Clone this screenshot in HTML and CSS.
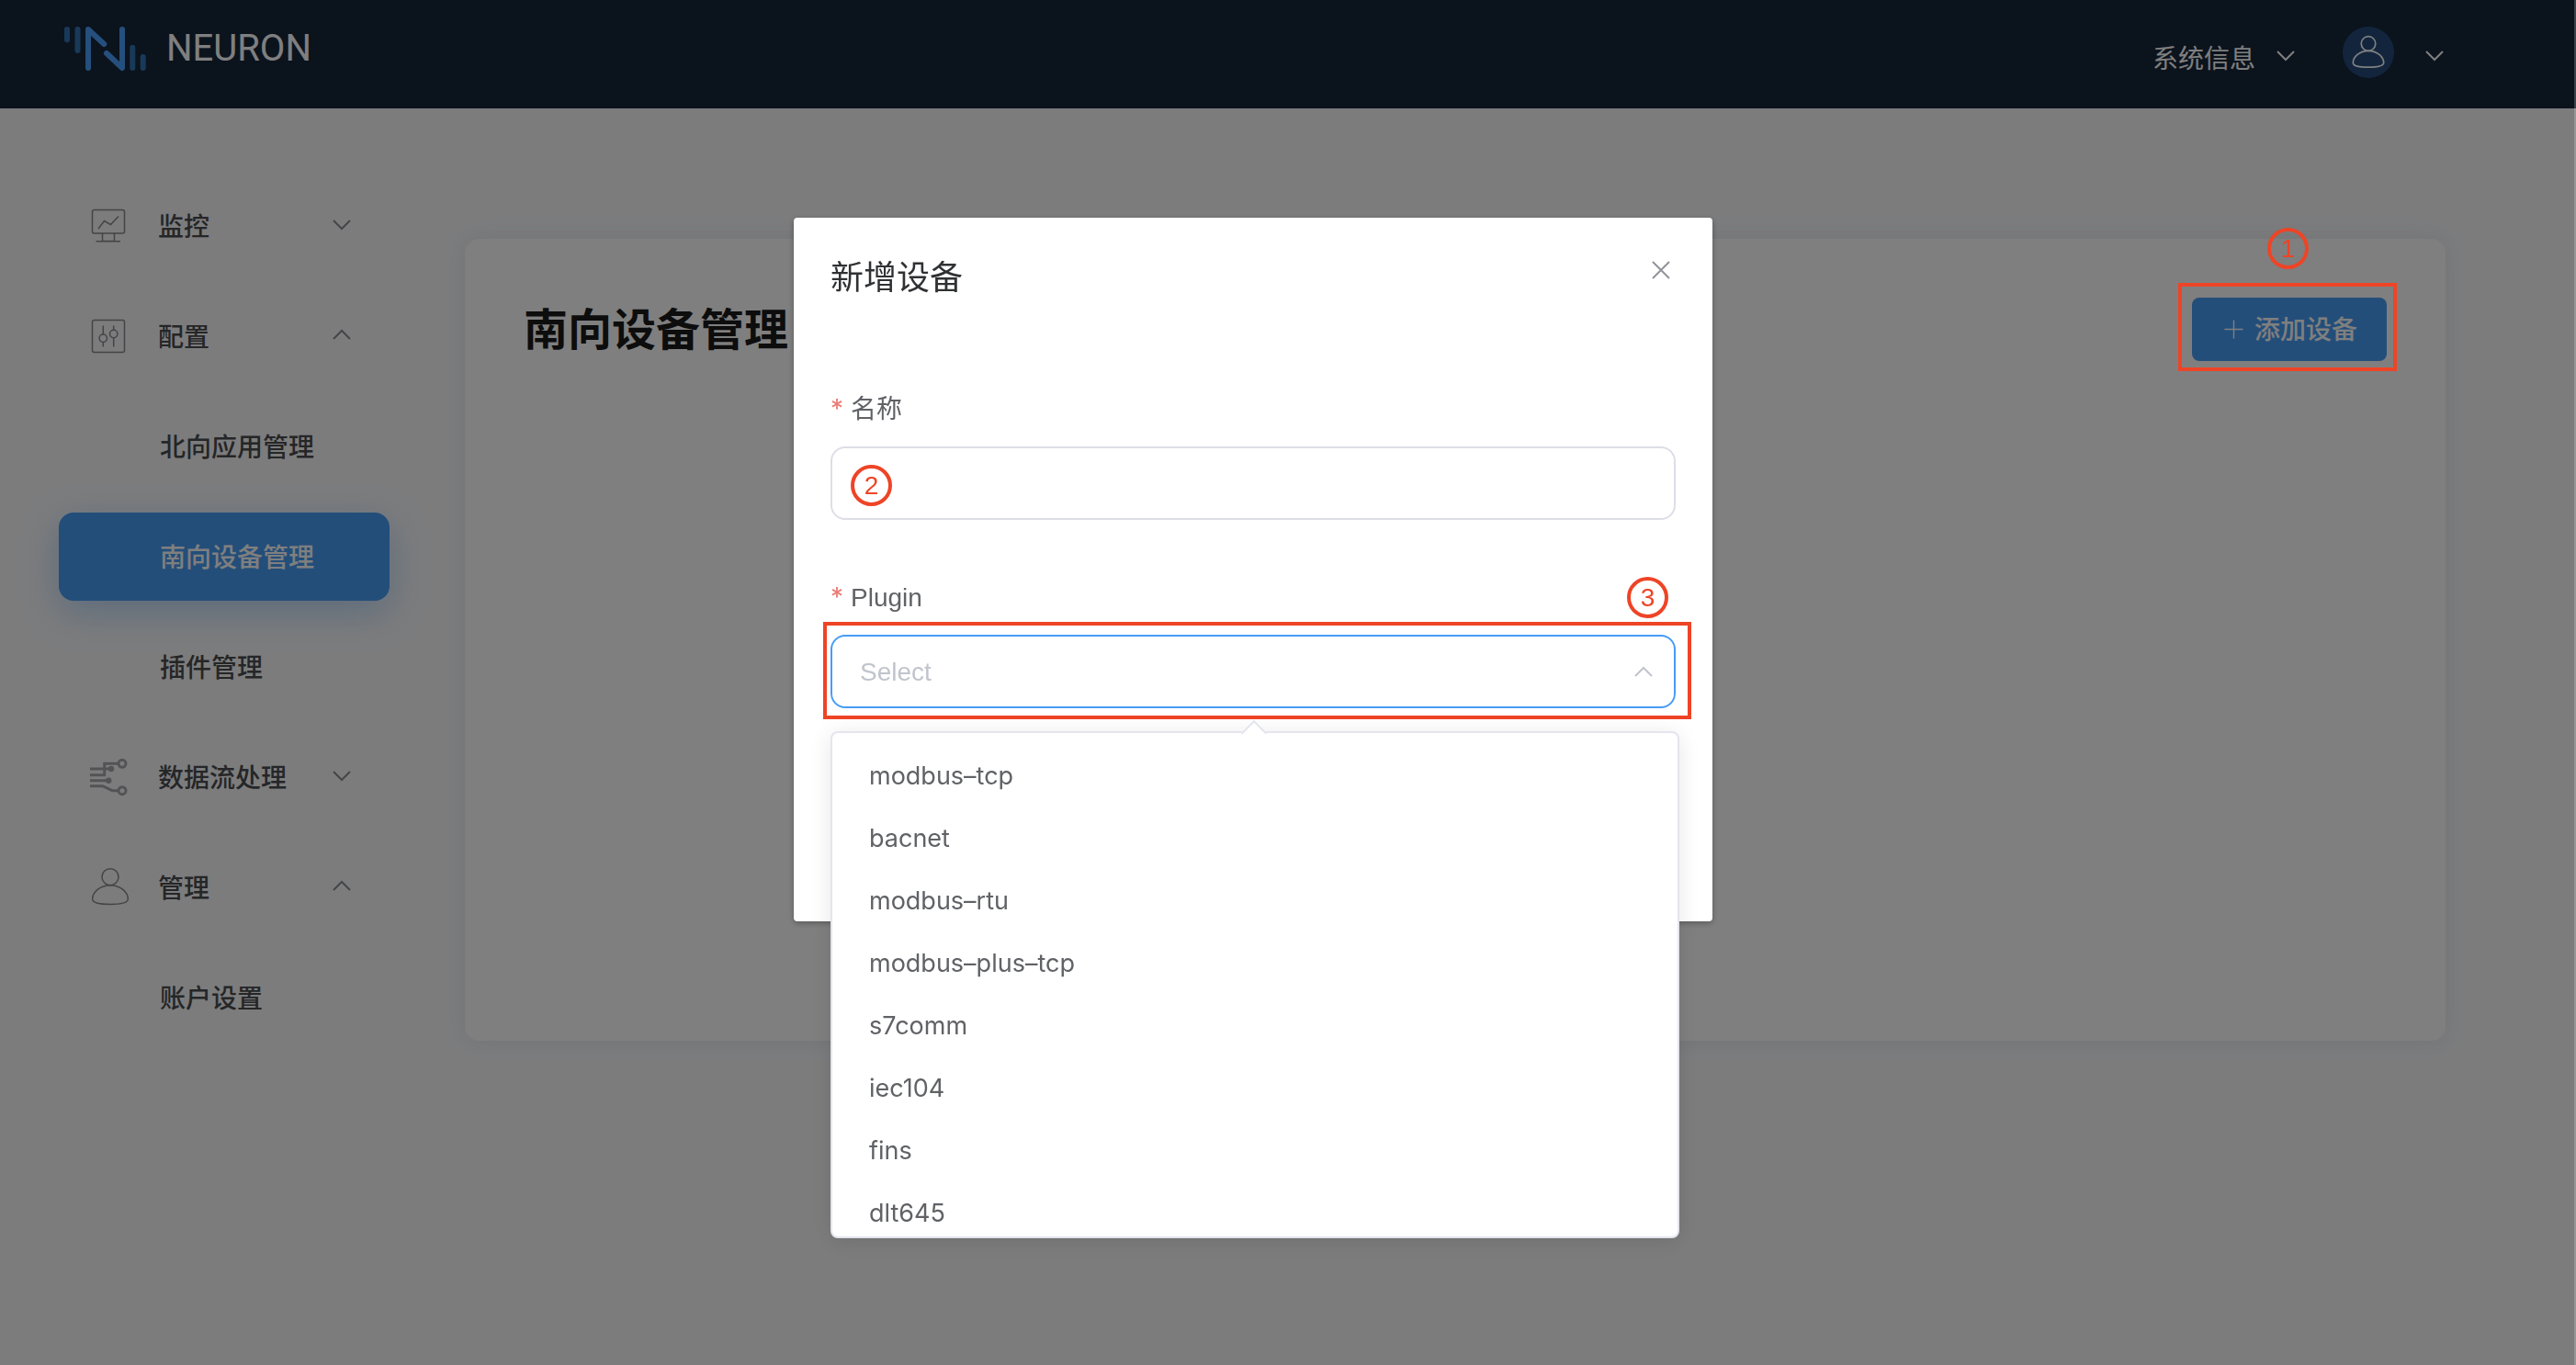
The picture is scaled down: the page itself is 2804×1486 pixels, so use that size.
FILE: index.html
```html
<!DOCTYPE html>
<html lang="zh-CN">
<head>
<meta charset="utf-8">
<title>NEURON</title>
<link rel="stylesheet" href="styles.css">
</head>
<body>
<svg class="sprite" aria-hidden="true">
  <symbol id="chevron-down" viewBox="0 0 20 20"><path d="M1 4l9 9 9-9"/></symbol>
  <symbol id="chevron-up" viewBox="0 0 20 20"><path d="M1 13l9-9 9 9"/></symbol>
  <symbol id="user" viewBox="0 0 44 44"><circle cx="22" cy="11" r="9"/><path d="M22 20c11 0 19.300 7.500 19.300 15 0 4.500-8 5.700-19.300 5.700S2.700 39.500 2.700 35c0-7.500 8.300-15 19.300-15z"/></symbol>
</svg>

<header class="header">
  <a class="brand" href="#">
    <svg class="brand-logo" viewBox="0 0 90 48" aria-hidden="true">
      <path class="logo-soft" d="M3 3v11.300M14.500 3v23M74.300 22.700V45M85.700 33v12"/>
      <path class="logo-main" d="M26 45V3l17.300 16M46 29l17 16V3"/>
    </svg>
    <span class="brand-name">NEURON</span>
  </a>
  <nav class="header-nav">
    <button class="header-link" type="button">系统信息 <svg class="chevron header-chevron"><use href="#chevron-down"/></svg></button>
    <button class="header-user" type="button" aria-label="账户">
      <span class="avatar"><svg class="avatar-icon"><use href="#user"/></svg></span>
      <svg class="chevron header-chevron"><use href="#chevron-down"/></svg>
    </button>
  </nav>
</header>

<div class="layout">
  <nav class="sidebar">
    <button class="menu-item" type="button">
      <svg class="menu-icon" viewBox="0 0 40 40"><rect x="2.500" y="2.500" width="35" height="25.500" rx="2"/><path d="M9 23l6.500-8.500 7 4 8.500-9M13.500 28v8.500h13V28M6.500 36.700h26.500"/></svg>
      <span>监控</span><svg class="chevron"><use href="#chevron-down"/></svg>
    </button>
    <button class="menu-item" type="button">
      <svg class="menu-icon" viewBox="0 0 40 40"><rect x="2.500" y="2.500" width="35" height="35" rx="2"/><path d="M14.300 8.500V18M14.300 26.500v5M25.700 8.500v4.700M25.700 21.700v9.800"/><circle cx="14.300" cy="22.300" r="4.200"/><circle cx="25.700" cy="17.500" r="4.200"/></svg>
      <span>配置</span><svg class="chevron"><use href="#chevron-up"/></svg>
    </button>
    <a class="menu-sub" href="#">北向应用管理</a>
    <a class="menu-sub active" href="#">南向设备管理</a>
    <a class="menu-sub" href="#">插件管理</a>
    <button class="menu-item" type="button">
      <svg class="menu-icon menu-icon-bold" viewBox="0 0 40 40"><path d="M0 11h22M0 17.700h15.700V5.300h15M0 23.700h19M0 29.700h13.700l10.600 5h6.400"/><circle cx="35" cy="5.300" r="4"/><circle cx="35" cy="34.700" r="4"/><circle class="dot" cx="23" cy="11" r="3.200"/><circle class="dot" cx="20.300" cy="23.700" r="3.200"/></svg>
      <span>数据流处理</span><svg class="chevron"><use href="#chevron-down"/></svg>
    </button>
    <button class="menu-item" type="button">
      <svg class="menu-icon" viewBox="0 2.300 40 40"><use href="#user" width="44" height="44"/></svg>
      <span>管理</span><svg class="chevron"><use href="#chevron-up"/></svg>
    </button>
    <a class="menu-sub" href="#">账户设置</a>
  </nav>

  <main class="main">
    <section class="card">
      <div class="card-head">
        <h1 class="card-title">南向设备管理</h1>
        <div class="add-wrap">
          <button class="add-button" type="button"><svg class="plus" viewBox="0 0 22 22"><path d="M11 0.500v21M0.500 11h21"/></svg><span class="add-text">添加设备</span></button>
          <span class="mark-box mark-box-add"></span>
          <span class="mark mark-one">1</span>
        </div>
      </div>
    </section>
  </main>
</div>

<div class="overlay">
  <section class="dialog" role="dialog" aria-labelledby="dialog-title">
    <div class="dialog-head">
      <h2 class="dialog-title" id="dialog-title">新增设备</h2>
      <button class="dialog-close" type="button" aria-label="关闭"><svg class="close-icon" viewBox="0 0 20 20"><path d="M1 1l18 18M19 1L1 19"/></svg></button>
    </div>
    <form class="form">
      <div class="field">
        <label class="label" for="name"><span class="required">*</span>名称</label>
        <div class="control">
          <input class="input" id="name" type="text">
          <span class="mark mark-two">2</span>
        </div>
      </div>
      <div class="field">
        <label class="label" for="plugin"><span class="required">*</span>Plugin</label>
        <div class="control">
          <select class="input select" id="plugin"><option>Select</option></select>
          <svg class="chevron select-chevron"><use href="#chevron-up"/></svg>
          <span class="mark-box mark-box-select"></span>
          <span class="mark mark-three">3</span>
          <div class="popper">
            <ul class="options" role="listbox" aria-label="Plugin">
              <li class="option" role="option">modbus–tcp</li>
              <li class="option" role="option">bacnet</li>
              <li class="option" role="option">modbus–rtu</li>
              <li class="option" role="option">modbus–plus–tcp</li>
              <li class="option" role="option">s7comm</li>
              <li class="option" role="option">iec104</li>
              <li class="option" role="option">fins</li>
              <li class="option" role="option">dlt645</li>
            </ul>
          </div>
        </div>
      </div>
    </form>
  </section>
</div>
</body>
</html>
```
FILE: styles.css
```css
:root {
  --primary: #469cf5;
  --mark: #ee4426;
  --text: #4b4c4f;
  --line: #dddee6;
}

* {
  box-sizing: border-box;
}

body {
  margin: 0;
  min-height: 100vh;
  background: #f8f9fb;
  color: var(--text);
  font-family: "Liberation Sans", "Noto Sans CJK SC", sans-serif;
  font-size: 28px;
}

button,
input,
select {
  margin: 0;
  padding: 0;
  border: 0;
  background: none;
  color: inherit;
  font: inherit;
}

a {
  color: inherit;
  text-decoration: none;
}

h1,
h2,
ul {
  margin: 0;
  padding: 0;
}

svg {
  fill: none;
  overflow: visible;
  flex: none;
}

.sprite {
  position: absolute;
  width: 0;
  height: 0;
}

.chevron {
  width: 20px;
  height: 20px;
  stroke: #8a8b8e;
  stroke-width: 2;
}

/* Header */
.header {
  display: flex;
  justify-content: space-between;
  align-items: flex-start;
  height: 118px;
  padding: 29px 144px 0 70px;
  background: #16263a;
  color: #fff;
}

.brand {
  display: flex;
  align-items: center;
  gap: 21px;
  height: 48px;
}

.brand-logo {
  width: 90px;
  height: 48px;
  stroke-width: 6;
  stroke-linecap: round;
  stroke-linejoin: round;
}

.logo-soft {
  stroke: #3273b2;
}

.logo-main {
  stroke: #4a9efa;
}

.brand-name {
  font-family: Roboto, sans-serif;
  font-size: 40px;
  line-height: 48px;
}

.header-nav {
  display: flex;
  align-items: center;
  gap: 52px;
}

.header-link {
  display: flex;
  align-items: center;
  gap: 23px;
  padding-top: 9px;
}

.header-chevron {
  stroke: #fff;
}

.header-user {
  display: flex;
  align-items: center;
  gap: 34px;
}

.header-user .header-chevron {
  margin-top: 10px;
}

.avatar {
  display: flex;
  align-items: center;
  justify-content: center;
  width: 56px;
  height: 56px;
  border-radius: 50%;
  background: #244b7a;
}

.avatar-icon {
  width: 38px;
  height: 38px;
  stroke: #fff;
  stroke-width: 2;
}

/* Page */
.layout {
  display: flex;
  padding: 0 142px 0 64px;
}

.sidebar {
  display: flex;
  flex: none;
  flex-direction: column;
  gap: 24px;
  width: 360px;
  padding-top: 80px;
  font-weight: 500;
}

.menu-item,
.menu-sub {
  display: flex;
  align-items: center;
  height: 96px;
  border-radius: 16px;
}

.menu-item {
  gap: 34px;
  padding: 0 42px 0 34px;
}

.menu-item span,
.add-text {
  padding-bottom: 3px;
}

.menu-item .chevron {
  margin-left: auto;
}

.menu-sub {
  padding: 0 0 3px 110px;
}

.menu-sub.active {
  background: var(--primary);
  box-shadow: 0 12px 40px rgba(70, 156, 245, 0.35);
  color: #fff;
}

.menu-icon {
  width: 40px;
  height: 40px;
  stroke: #88898c;
  stroke-width: 1.5;
}

.menu-icon-bold {
  stroke: #a6a7aa;
  stroke-width: 3;
}

.dot {
  fill: #a6a7aa;
  stroke: none;
}

.main {
  flex: 1;
  padding: 142px 0 0 82px;
}

.card {
  min-height: calc(100vh - 613px);
  padding: 64px;
  border-radius: 16px;
  background: #fff;
  box-shadow: 0 0 24px rgba(60, 70, 110, 0.1);
}

.card-head {
  display: flex;
  align-items: flex-start;
  justify-content: space-between;
}

.card-title {
  color: #1a1a1a;
  font-size: 48px;
  font-weight: 700;
  line-height: 72px;
}

.add-wrap,
.control {
  position: relative;
}

.add-button {
  display: flex;
  align-items: center;
  gap: 12px;
  height: 69px;
  padding: 0 32px 0 35px;
  border-radius: 8px;
  background: var(--primary);
  color: #fff;
  font-weight: 500;
}

.plus {
  width: 21px;
  height: 21px;
  stroke: #fff;
  stroke-width: 1.500;
}

/* Numbered step marks */
.mark {
  position: absolute;
  z-index: 20;
  display: flex;
  align-items: center;
  justify-content: center;
  width: 45px;
  height: 45px;
  border: 4px solid var(--mark);
  border-radius: 50%;
  color: var(--mark);
  line-height: 32px;
}

.mark-box {
  position: absolute;
  z-index: 20;
  border: 4px solid var(--mark);
  pointer-events: none;
}

.mark-one {
  top: -76px;
  left: 82px;
}

.mark-two {
  top: 20px;
  left: 22px;
}

.mark-three {
  top: -63px;
  right: 8px;
}

.mark-box-add {
  inset: -16px -11px -11px -15px;
}

.mark-box-select {
  inset: -14px -17px -12px -8px;
}

/* Dialog */
.overlay {
  position: fixed;
  inset: 0;
  z-index: 10;
  display: flex;
  align-items: flex-start;
  justify-content: center;
  padding: 237px 74px 0 0;
  border-right: 2px solid rgba(255, 255, 255, 0.2);
  background: rgba(0, 0, 0, 0.5);
}

.dialog {
  width: 1000px;
  padding: 40px 40px 232px;
  border-radius: 4px;
  background: #fff;
  box-shadow: 0 2px 6px rgba(0, 0, 0, 0.3);
}

.dialog-head {
  display: flex;
  align-items: flex-start;
  justify-content: space-between;
  margin-bottom: 96px;
}

.dialog-title {
  color: #303133;
  font-size: 36px;
  font-weight: 400;
  line-height: 52px;
}

.dialog-close {
  display: flex;
  padding: 7px 6px;
}

.close-icon {
  width: 20px;
  height: 20px;
  stroke: #909399;
  stroke-width: 2;
}

.form {
  display: flex;
  flex-direction: column;
  gap: 64px;
  color: #606266;
}

.field {
  display: flex;
  flex-direction: column;
  gap: 20px;
}

.label {
  display: flex;
  gap: 8px;
  line-height: 41px;
}

.required {
  color: #ec7a74;
  font-family: Inter, sans-serif;
}

.input {
  display: block;
  width: 100%;
  height: 80px;
  padding: 0 30px;
  border: 2px solid var(--line);
  border-radius: 16px;
  background: #fff;
}

.select {
  border-color: var(--primary);
  color: #c0c4cc;
  appearance: none;
}

.select-chevron {
  position: absolute;
  top: 32px;
  right: 25px;
  stroke: #c0c4cc;
}

.popper {
  position: absolute;
  top: 105px;
  left: 0;
  right: -4px;
  border: 2px solid #e4e5ed;
  border-radius: 8px;
  background: #fff;
  box-shadow: 0 4px 24px rgba(0, 0, 0, 0.1);
}

.popper::before {
  content: "";
  position: absolute;
  top: -10px;
  left: calc(50% - 11px);
  width: 18px;
  height: 18px;
  border: solid #e4e5ed;
  border-width: 2px 0 0 2px;
  background: #fff;
  transform: rotate(45deg);
}

.options {
  position: relative;
  max-height: 548px;
  padding: 13px 0;
  overflow: hidden;
  border-radius: 8px;
  list-style: none;
}

.option {
  padding: 0 40px;
  font-family: Inter, sans-serif;
  font-size: 27px;
  line-height: 68px;
}
```
